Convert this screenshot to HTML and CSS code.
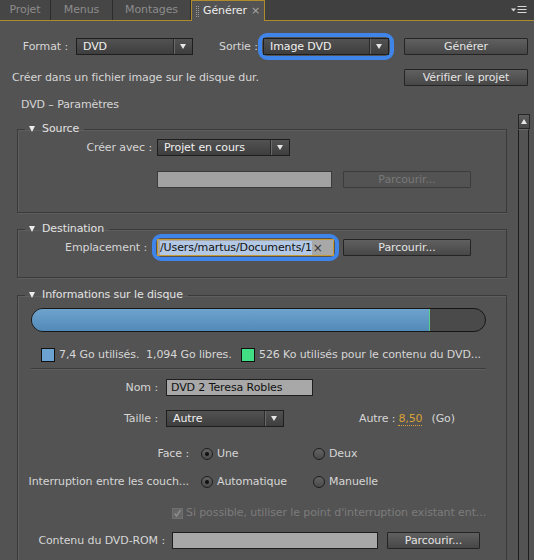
FILE: index.html
```html
<!DOCTYPE html>
<html>
<head>
<meta charset="utf-8">
<link rel="stylesheet" href="styles.css">
</head>
<body>
<div class="tabbar">
  <div class="tab t1">Projet</div>
  <div class="tab t2">Menus</div>
  <div class="tab t3">Montages</div>
  <div class="tab active"><span class="grip"></span><span class="tabname">Générer</span><span class="tabclose">×</span></div>
  <div class="tabfill"></div>
  <svg class="panelmenu" width="16" height="10" viewBox="0 0 16 10"><path d="M0 3.5h5l-2.5 3z" fill="#d8d8d8"/><path d="M6.5 1.5h9M6.5 4.5h9M6.5 7.5h9" stroke="#d8d8d8" stroke-width="1.2"/></svg>
</div>

<div class="row r1">
  <span class="lbl lbl-format">Format :</span>
  <div class="select sel-format"><span class="val">DVD</span><span class="drop"></span></div>
  <span class="lbl lbl-sortie">Sortie :</span>
  <div class="ring ring-sortie"><div class="select sel-sortie"><span class="val">Image DVD</span><span class="drop"></span></div></div>
  <div class="btn btn-generer">Générer</div>
</div>

<div class="row r2">
  <span class="desc">Créer dans un fichier image sur le disque dur.</span>
  <div class="btn btn-verif">Vérifier le projet</div>
</div>

<div class="title">DVD – Paramètres</div>

<div class="main">
  <div class="groups">
    <fieldset class="group g-source">
      <legend><span class="tri"></span>Source</legend>
      <div class="frow r-avec">
        <span class="flabel w134">Créer avec :</span>
        <div class="select sel-avec"><span class="val">Projet en cours</span><span class="drop"></span></div>
      </div>
      <div class="frow r-src2">
        <div class="field dis"></div>
        <div class="btn btn-dis">Parcourir...</div>
      </div>
    </fieldset>

    <fieldset class="group g-dest">
      <legend><span class="tri"></span>Destination</legend>
      <div class="frow r-dest">
        <span class="flabel w129">Emplacement :</span>
        <div class="ring ring-dest"><div class="input focus"><span class="seltext">/Users/martus/Documents/1</span><span class="clear">×</span></div></div>
        <div class="btn btn-browse">Parcourir...</div>
      </div>
    </fieldset>

    <fieldset class="group g-info">
      <legend><span class="tri"></span>Informations sur le disque</legend>
      <div class="diskbar"><div class="diskfill" style="width:398px"></div></div>
      <div class="disklegend">
        <span class="sq blue"></span><span class="lt1">7,4 Go utilisés.&nbsp; 1,094 Go libres.</span>
        <span class="sq green"></span><span class="lt2">526 Ko utilisés pour le contenu du DVD...</span>
      </div>
      <div class="sep"></div>
      <div class="frow r-nom">
        <span class="flabel w140">Nom :</span>
        <div class="input nom">DVD 2 Teresa Robles</div>
      </div>
      <div class="frow r-taille">
        <span class="flabel w140">Taille :</span>
        <div class="select sel-taille"><span class="val">Autre</span><span class="drop"></span></div>
        <span class="autre">Autre :</span>
        <span class="num">8,50</span>
        <span class="unit">(Go)</span>
      </div>
      <div class="frow r-face">
        <span class="flabel w174">Face :</span>
        <span class="opt"><span class="radio on"></span>Une</span>
        <span class="opt"><span class="radio"></span>Deux</span>
      </div>
      <div class="frow r-int">
        <span class="flabel w174">Interruption entre les couch...</span>
        <span class="opt"><span class="radio on"></span>Automatique</span>
        <span class="opt"><span class="radio"></span>Manuelle</span>
      </div>
      <div class="frow r-chk">
        <span class="chk"><svg width="9" height="9" viewBox="0 0 9 9"><path d="M1.5 4.5l2 2.5 4-6" fill="none" stroke="#8c8c8c" stroke-width="1.6"/></svg></span>
        <span class="dim">Si possible, utiliser le point d'interruption existant ent...</span>
      </div>
      <div class="frow r-rom">
        <span class="flabel w147">Contenu du DVD-ROM :</span>
        <div class="input rom"></div>
        <div class="btn btn-rom">Parcourir...</div>
      </div>
    </fieldset>
  </div>
  <div class="scrollbar">
    <div class="sb-up"><span></span></div>
    <div class="sb-track"></div>
  </div>
</div>
</body>
</html>
```

FILE: styles.css
```css
* { box-sizing: border-box; }
html, body { margin: 0; padding: 0; }
body {
  width: 534px;
  height: 560px;
  overflow: hidden;
  background: #535353;
  font-family: "DejaVu Sans", "Liberation Sans", sans-serif;
  font-size: 11px;
  line-height: 14px;
  letter-spacing: -0.1px;
  color: #d6d6d6;
  display: flex;
  flex-direction: column;
}

/* tabs */
.tabbar {
  display: flex;
  height: 21px;
  flex: none;
  background: #404040;
  border-bottom: 1px solid #b08a2c;
  align-items: stretch;
}
.tab {
  display: flex;
  align-items: center;
  justify-content: center;
  color: #8c8c8c;
  background: #464646;
  border-right: 1px solid #2c2c2c;
  font-size: 11px;
}
.t1 { width: 51px; }
.t2 { width: 62px; }
.t3 { width: 78px; }
.tab.active {
  width: 74px;
  background: #535353;
  color: #ececec;
  border: 1px solid #b08a2c;
  border-bottom: none;
  margin-bottom: -1px;
  justify-content: flex-start;
  padding-left: 4px;
}
.grip {
  width: 3px;
  height: 11px;
  border-left: 1px dotted #9a9a9a;
  border-right: 1px dotted #9a9a9a;
  margin-right: 4px;
}
.tabclose { color: #a8a8a8; margin-left: 4px; font-size: 11px; }
.tabfill { flex: 1; }
.panelmenu { align-self: center; margin-right: 7px; }

/* generic rows */
.row { display: flex; align-items: center; flex: none; }
.r1 { margin-top: 17px; height: 17px; }
.lbl { white-space: nowrap; }
.lbl-format { width: 68px; text-align: right; margin-right: 8px; }
.lbl-sortie { margin-left: 26px; width: 38px; }

.select {
  display: flex;
  align-items: center;
  height: 17px;
  border: 1px solid #1e1e1e;
  background: linear-gradient(#525252, #3e3e3e);
  color: #f0f0f0;
  padding-left: 6px;
}
.select .val { flex: 1; white-space: nowrap; }
.select .drop {
  width: 19px;
  height: 100%;
  border-left: 1px solid #2a2a2a;
  box-shadow: inset 1px 0 0 #6a6a6a;
  display: flex;
  align-items: center;
  justify-content: center;
}
.select .drop::after {
  content: "";
  border-left: 3.5px solid transparent;
  border-right: 3.5px solid transparent;
  border-top: 5px solid #e6e6e6;
}
.sel-format { width: 117px; }
.sel-sortie { width: 126px; }

.ring {
  display: flex;
  border: 4px solid #3f84e8;
  border-radius: 9px;
  padding: 1px;
  margin: -5px 0;
}
.ring-sortie { margin-left: 1px; }

.btn {
  height: 17px;
  border: 1px solid #242424;
  background: linear-gradient(#606060, #474747);
  color: #e4e4e4;
  display: flex;
  align-items: center;
  justify-content: center;
  border-radius: 1px;
  white-space: nowrap;
}
.btn-generer { width: 124px; margin-left: 10px; }

.r2 { margin-top: 14px; height: 17px; }
.desc { margin-left: 12px; flex: 1; }
.btn-verif { width: 124px; margin-right: 6px; }

.title { margin-top: 12px; padding-left: 21px; height: 14px; flex: none; }

/* main */
.main {
  flex: 1;
  display: flex;
  margin-top: 2px;
  min-height: 0;
}
.groups {
  width: 507px;
  padding-left: 17px;
  overflow: hidden;
}
.group {
  margin: 0;
  padding: 0;
  min-width: 0;
  border: 1px solid #3a3a3a;
  box-shadow: 1px 1px 0 #5e5e5e, inset 1px 1px 0 #5e5e5e;
}
.group legend {
  margin-left: 7px;
  padding: 0 5px 0 4px;
  line-height: 14px;
  color: #e2e2e2;
  display: flex;
  align-items: center;
}
.tri {
  display: inline-block;
  border-left: 3.5px solid transparent;
  border-right: 3.5px solid transparent;
  border-top: 6px solid #ececec;
  margin-right: 7px;
}
.g-source { margin-top: 8px; height: 91px; }
.g-dest { margin-top: 9px; height: 56px; }
.g-info { margin-top: 10px; height: 300px; }

.frow { display: flex; align-items: center; }
.flabel { text-align: right; white-space: nowrap; flex: none; }
.w134 { width: 134px; margin-right: 5px; }
.w129 { width: 129px; margin-right: 5px; }
.w140 { width: 140px; margin-right: 8px; }
.w174 { width: 171px; margin-right: 12px; }
.w147 { width: 147px; margin-right: 7px; }

.r-avec { margin-top: 3px; height: 17px; }
.sel-avec { width: 133px; }
.r-src2 { margin-top: 15px; height: 17px; padding-left: 139px; }
.field {
  height: 17px;
  width: 175px;
  background: #a2a2a2;
  border: 1px solid #3a3a3a;
}
.btn-dis {
  width: 128px;
  margin-left: 11px;
  background: #535353;
  border: 1px solid #3c3c3c;
  color: #787878;
}

.r-dest { margin-top: 3px; height: 17px; }
.input {
  height: 17px;
  background: #a8a8a8;
  border: 1px solid #1e1e1e;
  color: #111;
  display: flex;
  align-items: center;
  padding-left: 3px;
  white-space: nowrap;
  overflow: hidden;
}
.input.focus {
  width: 177px;
  border: 1px solid #c79b34;
  padding-left: 2px;
}
.seltext { background: #b2c8e4; color: #111; }
.clear { color: #333; margin-left: 1px; font-size: 12px; }
.btn-browse { width: 128px; margin-left: 4px; }

.diskbar {
  margin: 6px 0 0 13px;
  width: 455px;
  height: 24px;
  border: 1px solid #161616;
  border-radius: 12px;
  background: #4a4a4a;
  overflow: hidden;
}
.diskfill {
  height: 100%;
  background: linear-gradient(#6ea3cd, #5189b8);
  border-right: 1px solid #58d08a;
}
.disklegend {
  display: flex;
  align-items: center;
  margin-top: 16px;
  height: 14px;
  padding-left: 23px;
  white-space: nowrap;
}
.sq { width: 14px; height: 14px; border: 1px solid #111; flex: none; }
.sq.blue { background: #6ca2cf; }
.sq.green { background: #41de85; }
.lt1 { width: 182px; margin-left: 4px; }
.lt2 { margin-left: 4px; }
.sep {
  margin: 6px 0 0 13px;
  width: 455px;
  height: 1px;
  background: #3c3c3c;
  box-shadow: 0 1px 0 #5e5e5e;
}
.r-nom { margin-top: 10px; height: 17px; }
.input.nom { width: 147px; padding-left: 4px; }
.r-taille { margin-top: 14px; height: 17px; }
.sel-taille { width: 118px; }
.autre { margin-left: 75px; }
.num { margin-left: 3px; color: #d9a134; border-bottom: 1px dotted #d9a134; line-height: 13px; }
.unit { margin-left: 9px; }

.r-face { margin-top: 20px; height: 14px; }
.r-int { margin-top: 14px; height: 14px; }
.opt { display: flex; align-items: center; width: 112px; white-space: nowrap; }
.radio {
  width: 12px;
  height: 12px;
  border-radius: 50%;
  border: 1px solid #1e1e1e;
  background: linear-gradient(#636363, #4a4a4a);
  display: flex;
  align-items: center;
  justify-content: center;
  margin-right: 4px;
  flex: none;
}
.radio.on::after {
  content: "";
  width: 4px;
  height: 4px;
  border-radius: 50%;
  background: #111;
}

.r-chk { margin-top: 17px; height: 14px; padding-left: 154px; }
.chk {
  width: 11px;
  height: 11px;
  background: #666;
  border: 1px solid #707070;
  display: flex;
  align-items: center;
  justify-content: center;
  margin-right: 3px;
}
.dim { color: #7c7c7c; white-space: nowrap; }

.r-rom { margin-top: 12px; height: 17px; }
.input.rom { width: 206px; }
.btn-rom { width: 93px; margin-left: 9px; }

/* scrollbar */
.scrollbar {
  width: 12px;
  margin-left: 11px;
  display: flex;
  flex-direction: column;
}
.sb-up {
  height: 15px;
  border: 1px solid #262626;
  background: linear-gradient(#5e5e5e, #474747);
  display: flex;
  align-items: center;
  justify-content: center;
}
.sb-up span {
  border-left: 3.5px solid transparent;
  border-right: 3.5px solid transparent;
  border-bottom: 5px solid #e6e6e6;
}
.sb-track {
  flex: 1;
  width: 11px;
  border-left: 1px solid #1c1c1c;
  border-right: 1px solid #1c1c1c;
  border-top: 1px solid #6a6a6a;
}
```
